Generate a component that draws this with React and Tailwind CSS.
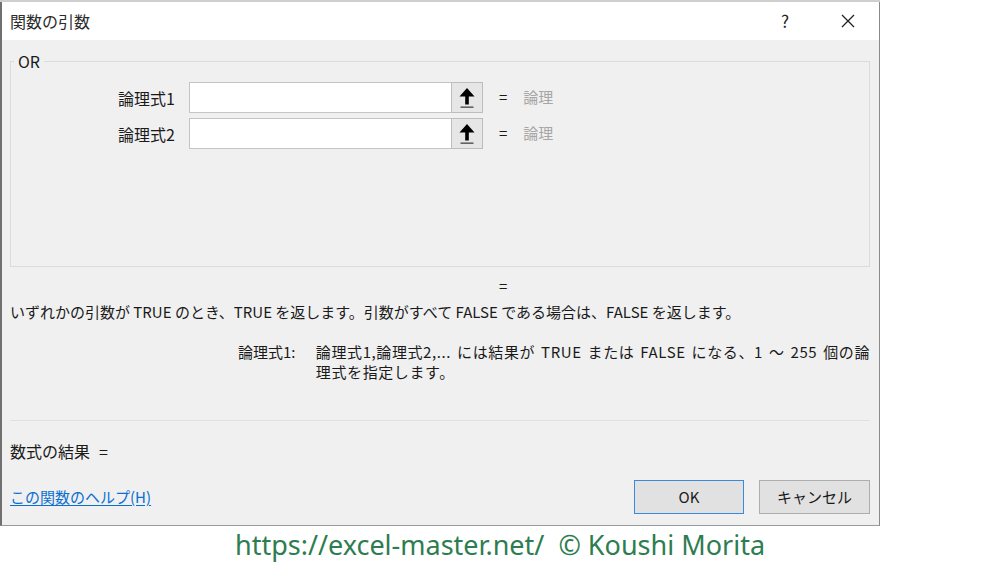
import React from 'react';

const ui = { fontFamily: '"Noto Sans CJK JP", "Noto Sans", sans-serif' };

const RefArrow = () => (
  <svg width="16" height="22" viewBox="0 0 16 22">
    <polygon points="8,1 0.5,9.5 15.5,9.5" fill="#000" />
    <rect x="6.2" y="8" width="3.6" height="9.5" fill="#000" />
    <rect x="1.5" y="19.5" width="13" height="1.3" fill="#444" />
  </svg>
);

const ArgRow = ({ label }) => (
  <div className="flex items-center h-[31px]">
    <div className="w-[164px] text-right text-[16px] text-[#1a1a1a] leading-none">{label}</div>
    <div className="ml-[14px] flex h-[31px]">
      <div className="w-[263px] h-full bg-white border border-[#c4c4c4]" />
      <div className="w-[32px] h-full bg-[#e6e6e6] border border-[#bdbdbd] -ml-px flex items-center justify-center">
        <RefArrow />
      </div>
    </div>
    <span className="ml-[16px] text-[15px] text-[#1a1a1a]">=</span>
    <span className="ml-[16px] text-[15px] text-[#a6a6a6]">論理</span>
  </div>
);

export default function App() {
  return (
    <div className="w-[1000px] h-[563px] bg-white flex flex-col overflow-hidden" style={ui}>
      <div className="w-[880px] h-[2px] bg-[#cfcfcf] shrink-0" />
      <div className="w-[880px] h-[524px] shrink-0 border-l-2 border-r border-b border-l-[#707070] border-r-[#8a8a8a] border-b-[#9a9a9a] flex flex-col">
        {/* title bar */}
        <div className="h-[38px] bg-white flex items-center pl-[8px] shrink-0">
          <span className="text-[16px] text-[#2b2b2b]">関数の引数</span>
          <span className="ml-auto text-[17px] text-[#222] mr-[52px]">?</span>
          <svg width="14" height="14" viewBox="0 0 14 14" className="mr-[24px]">
            <path d="M1 1 L13 13 M13 1 L1 13" stroke="#222" strokeWidth="1.3" />
          </svg>
        </div>

        {/* body */}
        <div className="flex-1 bg-[#f0f0f0] px-[8px] pr-[9px] pt-[21px] flex flex-col">
          <div className="relative h-[206px] border border-[#dcdcdc] pt-[20px] flex flex-col gap-[5px]">
            <span className="absolute -top-[11px] left-[3px] px-[4px] bg-[#f0f0f0] text-[16px] text-[#1a1a1a] leading-[20px]">OR</span>
            <ArgRow label="論理式1" />
            <ArgRow label="論理式2" />
          </div>

          <div className="mt-[9px] h-[20px] pl-[489px] text-[15px] leading-[20px] text-[#1a1a1a]">=</div>

          <p className="mt-[6px] text-[15px] leading-[20px] text-[#1a1a1a] whitespace-nowrap">
            いずれかの引数が TRUE のとき、TRUE を返します。引数がすべて FALSE である場合は、FALSE を返します。
          </p>

          <div className="mt-[20px] flex text-[15px] leading-[20px] text-[#1a1a1a]">
            <div className="ml-[228px] w-[83px] whitespace-nowrap">論理式1:</div>
            <div className="whitespace-nowrap tracking-[0.6px] [word-spacing:2px]">
              <div>論理式1,論理式2,... には結果が TRUE または FALSE になる、1 ～ 255 個の論</div>
              <div>理式を指定します。</div>
            </div>
          </div>

          <div className="mt-[38px] border-t border-[#e0e0e0]" />

          <div className="mt-[20px] h-[20px] text-[16px] leading-[20px] text-[#1a1a1a]">
            数式の結果<span className="ml-[9px]">=</span>
          </div>

          <div className="mt-[19px] flex items-center">
            <a className="text-[15px] text-[#0b6fd1] underline underline-offset-2 leading-[20px]" href="#">この関数のヘルプ(H)</a>
            <div className="ml-auto flex gap-[15px]">
              <button className="w-[110px] h-[34px] bg-[#e1e1e1] border border-[#3a8ae0] text-[15px] text-[#1a1a1a]" style={ui}>OK</button>
              <button className="w-[111px] h-[34px] bg-[#e1e1e1] border border-[#adadad] text-[15px] text-[#1a1a1a]" style={ui}>キャンセル</button>
            </div>
          </div>
        </div>
      </div>

      {/* footer credit */}
      <div className="h-[37px] shrink-0 flex items-center justify-center text-[27px] leading-[37px] text-[#2e7d50] whitespace-pre" style={{ fontFamily: '"Noto Sans", sans-serif' }}>
        https://excel-master.net/  © Koushi Morita
      </div>
    </div>
  );
}
